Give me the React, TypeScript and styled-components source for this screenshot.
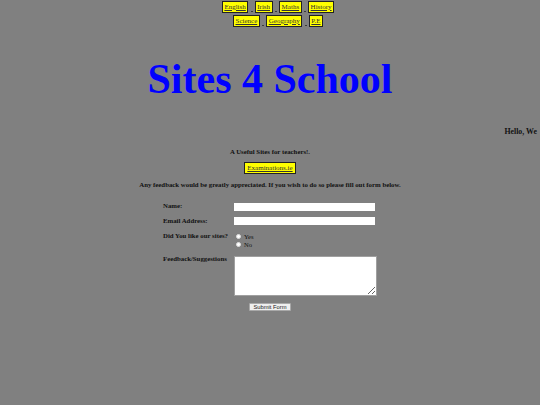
import React from "react";
import styled, { createGlobalStyle } from "styled-components";

const Global = createGlobalStyle`
  html, body { margin: 0; padding: 0; background: #808080; }
  body { font-family: "Liberation Serif", "Times New Roman", serif; color: #111; overflow: hidden; }
  * { box-sizing: border-box; }
`;

const Page = styled.div`
  width: 540px;
  height: 405px;
  background: #808080;
  display: flex;
  flex-direction: column;
  align-items: stretch;
`;

const Nav = styled.nav`
  display: flex;
  flex-direction: column;
  align-items: center;
  gap: 1.7px;
  padding: 1px 0 0 16px;
`;

const NavRow = styled.div`
  display: flex;
  align-items: flex-start;
`;

const Sep = styled.span`
  width: 6.5px;
  height: 12.4px;
  position: relative;
  &::after {
    content: "";
    position: absolute;
    left: 2.3px;
    top: 9.5px;
    width: 2px;
    height: 1px;
    background: #3a3a3a;
  }
`;

const YellowLink = styled.a<{ $tall?: boolean }>`
  display: inline-block;
  background: #ffff00;
  border: 1.5px solid #222;
  padding: ${(p) => (p.$tall ? "1px 2px" : "0.9px 1.5px")};
  font-size: 7px;
  line-height: 8px;
  color: #333;
  text-decoration: underline;
  white-space: nowrap;
`;

const Title = styled.h1`
  margin: 27.5px 0 0;
  font-size: 42px;
  line-height: 48px;
  font-weight: bold;
  color: #0000ff;
  text-align: center;
`;

const Marquee = styled.div`
  margin-top: 25.2px;
  overflow: hidden;
  white-space: nowrap;
  padding-left: 504.5px;
  font-size: 7.8px;
  line-height: 8px;
  font-weight: bold;
`;

const Line = styled.p<{ $mt: number }>`
  margin: ${(p) => p.$mt}px 0 0;
  font-size: 6.8px;
  line-height: 8px;
  font-weight: bold;
  text-align: center;
`;

const Center = styled.div<{ $mt: number }>`
  margin-top: ${(p) => p.$mt}px;
  display: flex;
  justify-content: center;
`;

const Form = styled.form`
  margin: 13.5px auto 0;
  width: 214px;
  display: flex;
  flex-direction: column;
`;

const FormRow = styled.div<{ $mt: number }>`
  margin-top: ${(p) => p.$mt}px;
  display: grid;
  grid-template-columns: 71px 143px;
  align-items: start;
`;

const Label = styled.label`
  font-size: 6.8px;
  line-height: 8px;
  font-weight: bold;
  white-space: nowrap;
`;

const TextInput = styled.input`
  appearance: none;
  margin: 0.8px 0 0;
  width: 141px;
  height: 8px;
  border: none;
  background: #fff;
  padding: 0;
  outline: none;
`;

const RadioGroup = styled.div`
  display: flex;
  flex-direction: column;
  padding-top: 0.7px;
`;

const RadioOption = styled.label`
  display: flex;
  align-items: center;
  height: 8.4px;
  font-size: 6.5px;
  line-height: 8.4px;
  padding-left: 1.7px;
`;

const Radio = styled.input`
  appearance: none;
  margin: 0 3.3px 0 0;
  width: 5px;
  height: 5px;
  border-radius: 50%;
  background: #fff;
  border: 0.5px solid #ddd;
  position: relative;
  top: -0.6px;
`;

const TextArea = styled.textarea`
  margin: 0.8px 0 0 -0.5px;
  width: 143px;
  height: 40.5px;
  background: #fff;
  border: 1px solid #a0a0a0;
  resize: both;
  padding: 0;
  display: block;
`;

const SubmitRow = styled.div`
  margin-top: 7px;
  display: flex;
  justify-content: center;
`;

const SubmitButton = styled.button`
  width: 42px;
  height: 8.2px;
  padding: 0;
  font-family: "Liberation Sans", Arial, sans-serif;
  font-size: 5.8px;
  line-height: 6px;
  color: #222;
  background: #efefef;
  border: 0.6px solid #a9a9a9;
  border-radius: 1px;
`;

const row1 = ["English", "Irish", "Maths", "History"];
const row2 = ["Science", "Geography", "P.E"];

function LinkRow({ items }: { items: string[] }) {
  return (
    <NavRow>
      {items.map((t, i) => (
        <React.Fragment key={t}>
          {i > 0 && <Sep />}
          <YellowLink href="#">{t}</YellowLink>
        </React.Fragment>
      ))}
    </NavRow>
  );
}

export default function App() {
  return (
    <Page>
      <Global />
      <Nav>
        <LinkRow items={row1} />
        <LinkRow items={row2} />
      </Nav>
      <Title>Sites 4 School</Title>
      <Marquee>Hello, We</Marquee>
      <Line $mt={11.5}>A Useful Sites for teachers!.</Line>
      <Center $mt={6}>
        <YellowLink href="#" $tall>Examinations.ie</YellowLink>
      </Center>
      <Line $mt={7.1}>
        Any feedback would be greatly appreciated. If you wish to do so please fill out form below.
      </Line>
      <Form onSubmit={(e) => e.preventDefault()}>
        <FormRow $mt={0}>
          <Label>Name:</Label>
          <TextInput type="text" />
        </FormRow>
        <FormRow $mt={5.5}>
          <Label>Email Address:</Label>
          <TextInput type="text" />
        </FormRow>
        <FormRow $mt={6.5}>
          <Label>Did You like our sites?</Label>
          <RadioGroup>
            <RadioOption>
              <Radio type="radio" name="like" />
              Yes
            </RadioOption>
            <RadioOption>
              <Radio type="radio" name="like" />
              No
            </RadioOption>
          </RadioGroup>
        </FormRow>
        <FormRow $mt={5.5}>
          <Label>Feedback/Suggestions</Label>
          <TextArea />
        </FormRow>
        <SubmitRow>
          <SubmitButton type="submit">Submit Form</SubmitButton>
        </SubmitRow>
      </Form>
    </Page>
  );
}
